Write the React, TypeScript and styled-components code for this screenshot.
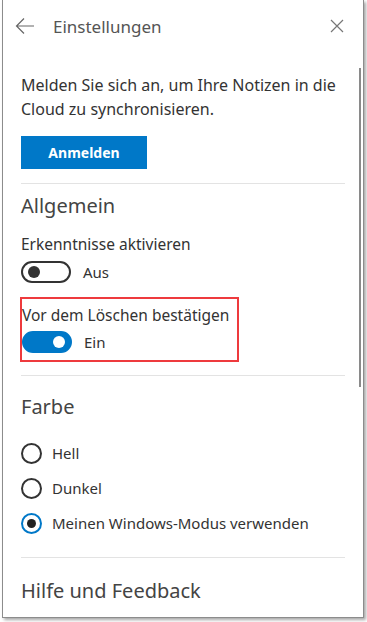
import React from "react";
import styled, { createGlobalStyle } from "styled-components";

const GlobalStyle = createGlobalStyle`
  html, body {
    margin: 0;
    padding: 0;
    background: #ffffff;
  }
  body {
    font-family: "Noto Sans", "Open Sans", sans-serif;
    color: #333333;
  }
`;

const Page = styled.div`
  width: 367px;
  height: 622px;
  padding-left: 2px;
  box-sizing: border-box;
`;

const Window = styled.div`
  position: relative;
  width: 362px;
  height: 618px;
  box-sizing: border-box;
  border: 1px solid #8c8c8c;
  border-top: none;
  background: #ffffff;
  box-shadow: 2px 2px 3px rgba(0, 0, 0, 0.35);
`;

const Header = styled.div`
  display: flex;
  align-items: center;
  height: 52px;
  padding: 0 16px 0 12px;
`;

const IconButton = styled.button`
  display: flex;
  align-items: center;
  justify-content: center;
  background: none;
  border: none;
  padding: 0;
  width: 20px;
  height: 20px;
  color: #666666;
`;

const Title = styled.div`
  flex: 1;
  margin-left: 18px;
  font-size: 17px;
  color: #555555;
`;

const Content = styled.div`
  padding: 0 17px 0 18px;
`;

const Intro = styled.p`
  margin: 21px 0 0;
  font-size: 16px;
  line-height: 24px;
  color: #333333;
`;

const PrimaryButton = styled.button`
  margin-top: 15px;
  width: 126px;
  height: 33px;
  background: #0078c8;
  border: none;
  color: #ffffff;
  font-family: inherit;
  font-size: 14px;
  font-weight: 700;
`;

const Divider = styled.div<{ $top: number }>`
  height: 1px;
  background: #e3e3e3;
  margin: ${(p) => p.$top}px 0 0;
  width: 324px;
`;

const SectionTitle = styled.h2<{ $top: number }>`
  margin: ${(p) => p.$top}px 0 0;
  font-size: 20px;
  font-weight: 400;
  line-height: 28px;
  color: #444444;
`;

const SettingLabel = styled.div`
  font-size: 15.5px;
  line-height: 20px;
  color: #333333;
`;

const Setting = styled.div<{ $top: number }>`
  margin-top: ${(p) => p.$top}px;
  display: flex;
  flex-direction: column;
  gap: 7px;
`;

const Highlight = styled.div`
  margin: 14px 0 0 -1px;
  width: 219px;
  height: 65px;
  box-sizing: border-box;
  border: 2px solid #ee3a3d;
  padding: 6px 0 0 0;
  display: flex;
  flex-direction: column;
  gap: 6px;
`;

const ToggleRow = styled.div`
  display: flex;
  align-items: center;
  gap: 12px;
  font-size: 15px;
  color: #333333;
`;

const Track = styled.div<{ $on: boolean }>`
  position: relative;
  width: 50px;
  height: 22px;
  box-sizing: border-box;
  border-radius: 11px;
  border: 2px solid ${(p) => (p.$on ? "#0078c8" : "#333333")};
  background: ${(p) => (p.$on ? "#0078c8" : "#ffffff")};
`;

const Thumb = styled.div<{ $on: boolean }>`
  position: absolute;
  top: 3px;
  ${(p) => (p.$on ? "right: 5px;" : "left: 5px;")}
  width: 12px;
  height: 12px;
  border-radius: 50%;
  background: ${(p) => (p.$on ? "#ffffff" : "#333333")};
`;

const RadioList = styled.div`
  margin-top: 22px;
  display: flex;
  flex-direction: column;
  gap: 15px;
`;

const RadioRow = styled.label`
  display: flex;
  align-items: center;
  gap: 10px;
  font-size: 15px;
  color: #333333;
  height: 20px;
`;

const RadioCircle = styled.span<{ $checked: boolean }>`
  width: 21px;
  height: 21px;
  box-sizing: border-box;
  border-radius: 50%;
  border: 2px solid ${(p) => (p.$checked ? "#0078c8" : "#333333")};
  display: flex;
  align-items: center;
  justify-content: center;
  &::after {
    content: "";
    display: ${(p) => (p.$checked ? "block" : "none")};
    width: 9px;
    height: 9px;
    border-radius: 50%;
    background: #222222;
  }
`;

const ScrollIndicator = styled.div`
  position: absolute;
  top: 68px;
  right: 2px;
  width: 2px;
  height: 319px;
  background: #8a8a8a;
`;

const Toggle = ({ on, label }: { on: boolean; label: string }) => (
  <ToggleRow>
    <Track $on={on}>
      <Thumb $on={on} />
    </Track>
    {label}
  </ToggleRow>
);

const Radio = ({ checked, label }: { checked: boolean; label: string }) => (
  <RadioRow>
    <RadioCircle $checked={checked} />
    {label}
  </RadioRow>
);

export default function App() {
  return (
    <>
      <GlobalStyle />
      <Page>
        <Window>
          <Header>
            <IconButton aria-label="Zurück">
              <svg width="20" height="20" viewBox="0 0 20 20" fill="none" stroke="#666" strokeWidth="1.2">
                <path d="M1.5 10H19M9 2.5L1.5 10L9 17.5" />
              </svg>
            </IconButton>
            <Title>Einstellungen</Title>
            <IconButton aria-label="Schließen">
              <svg width="14" height="14" viewBox="0 0 14 14" fill="none" stroke="#777" strokeWidth="1.2">
                <path d="M1 1L13 13M13 1L1 13" />
              </svg>
            </IconButton>
          </Header>
          <ScrollIndicator />
          <Content>
            <Intro>
              Melden Sie sich an, um Ihre Notizen in die Cloud zu synchronisieren.
            </Intro>
            <PrimaryButton>Anmelden</PrimaryButton>
            <Divider $top={14} />
            <SectionTitle $top={8}>Allgemein</SectionTitle>
            <Setting $top={14}>
              <SettingLabel>Erkenntnisse aktivieren</SettingLabel>
              <Toggle on={false} label="Aus" />
            </Setting>
            <Highlight>
              <SettingLabel>Vor dem Löschen bestätigen</SettingLabel>
              <Toggle on={true} label="Ein" />
            </Highlight>
            <Divider $top={13} />
            <SectionTitle $top={17}>Farbe</SectionTitle>
            <RadioList>
              <Radio checked={false} label="Hell" />
              <Radio checked={false} label="Dunkel" />
              <Radio checked={true} label="Meinen Windows-Modus verwenden" />
            </RadioList>
            <Divider $top={24} />
            <SectionTitle $top={19}>Hilfe und Feedback</SectionTitle>
          </Content>
        </Window>
      </Page>
    </>
  );
}
